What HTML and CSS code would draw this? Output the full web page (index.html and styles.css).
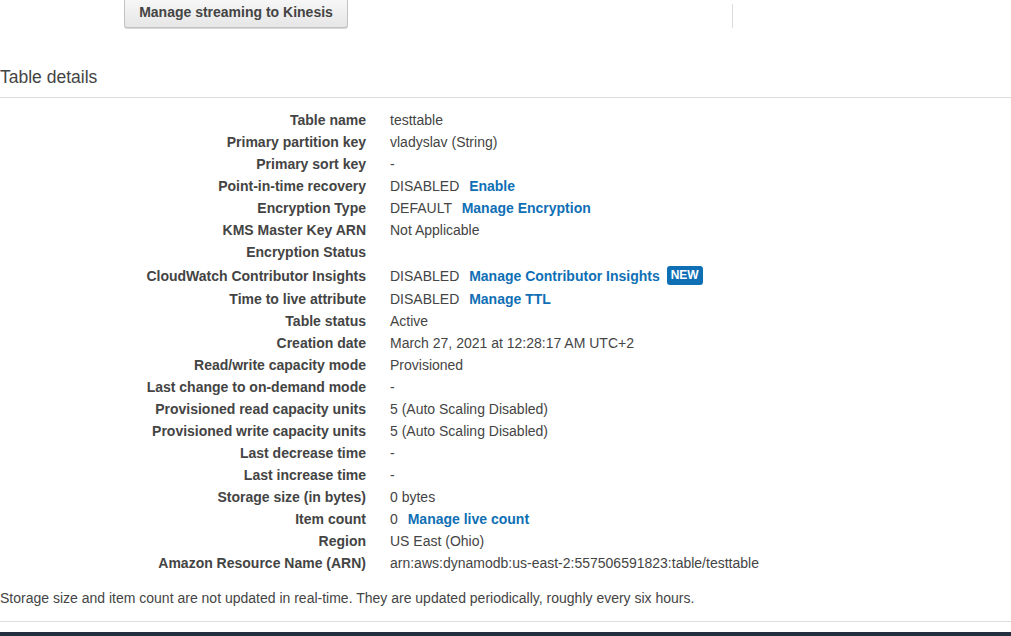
FILE: index.html
```html
<!DOCTYPE html>
<html>
<head>
<meta charset="utf-8">
<link rel="stylesheet" href="styles.css">
</head>
<body>
<div class="page">
  <div class="top">
    <div class="top-left">
      <button class="btn">Manage streaming to Kinesis</button>
    </div>
    <div class="vdivider"></div>
  </div>

  <h2 class="heading">Table details</h2>

  <div class="details">
    <div class="row"><div class="label">Table name</div><div class="value">testtable</div></div>
    <div class="row"><div class="label">Primary partition key</div><div class="value">vladyslav (String)</div></div>
    <div class="row"><div class="label">Primary sort key</div><div class="value">-</div></div>
    <div class="row"><div class="label">Point-in-time recovery</div><div class="value">DISABLED <a class="link">Enable</a></div></div>
    <div class="row"><div class="label">Encryption Type</div><div class="value">DEFAULT <a class="link">Manage Encryption</a></div></div>
    <div class="row"><div class="label">KMS Master Key ARN</div><div class="value">Not Applicable</div></div>
    <div class="row"><div class="label">Encryption Status</div><div class="value"></div></div>
    <div class="row tall"><div class="label">CloudWatch Contributor Insights</div><div class="value">DISABLED <a class="link">Manage Contributor Insights</a><span class="badge">NEW</span></div></div>
    <div class="row"><div class="label">Time to live attribute</div><div class="value">DISABLED <a class="link">Manage TTL</a></div></div>
    <div class="row"><div class="label">Table status</div><div class="value">Active</div></div>
    <div class="row"><div class="label">Creation date</div><div class="value">March 27, 2021 at 12:28:17 AM UTC+2</div></div>
    <div class="row"><div class="label">Read/write capacity mode</div><div class="value">Provisioned</div></div>
    <div class="row"><div class="label">Last change to on-demand mode</div><div class="value">-</div></div>
    <div class="row"><div class="label">Provisioned read capacity units</div><div class="value">5 (Auto Scaling Disabled)</div></div>
    <div class="row"><div class="label">Provisioned write capacity units</div><div class="value">5 (Auto Scaling Disabled)</div></div>
    <div class="row"><div class="label">Last decrease time</div><div class="value">-</div></div>
    <div class="row"><div class="label">Last increase time</div><div class="value">-</div></div>
    <div class="row"><div class="label">Storage size (in bytes)</div><div class="value">0 bytes</div></div>
    <div class="row"><div class="label">Item count</div><div class="value">0 <a class="link">Manage live count</a></div></div>
    <div class="row"><div class="label">Region</div><div class="value">US East (Ohio)</div></div>
    <div class="row"><div class="label">Amazon Resource Name (ARN)</div><div class="value">arn:aws:dynamodb:us-east-2:557506591823:table/testtable</div></div>
  </div>

  <p class="note">Storage size and item count are not updated in real-time. They are updated periodically, roughly every six hours.</p>
  <div class="footer-rule"></div>
  <div class="footer-bar"></div>
</div>
</body>
</html>
```

FILE: styles.css
```css
html, body {
  margin: 0;
  padding: 0;
  background: #fff;
}
body {
  font-family: "Liberation Sans", Arial, sans-serif;
  font-size: 14px;
  color: #444;
  overflow: hidden;
}
.page {
  display: flex;
  flex-direction: column;
  margin-top: -4px;
}
.top {
  display: flex;
  align-items: flex-start;
  height: 32px;
}
.top-left {
  width: 732px;
  padding-left: 124px;
  box-sizing: border-box;
}
.btn {
  display: block;
  width: 224px;
  height: 32px;
  box-sizing: border-box;
  border: 1px solid #c2c2c2;
  border-top: none;
  border-radius: 0 0 3px 3px;
  background: linear-gradient(#f9f9f9, #e6e6e6);
  box-shadow: 0 1px 0 #d8d8d8;
  font-family: "Liberation Sans", Arial, sans-serif;
  font-size: 14px;
  font-weight: bold;
  color: #444;
  padding: 0;
  padding-top: 1px;
}
.vdivider {
  width: 1px;
  height: 24px;
  margin-top: 8px;
  background: #dcdcdc;
}
.heading {
  margin: 37px 0 0 0;
  font-size: 17.5px;
  font-weight: normal;
  color: #444;
  line-height: 24px;
  padding-bottom: 8px;
  border-bottom: 1px solid #dddddd;
}
.details {
  display: flex;
  flex-direction: column;
  padding-top: 11px;
}
.row {
  display: flex;
  align-items: center;
  height: 22px;
  gap: 24px;
}
.row.tall {
  height: 25px;
}
.label {
  width: 366px;
  flex-shrink: 0;
  text-align: right;
  font-weight: bold;
  color: #444;
}
.value {
  display: flex;
  align-items: center;
  white-space: pre;
  color: #444;
}
.link {
  color: #0f6fb5;
  font-weight: bold;
  margin-left: 6px;
  cursor: pointer;
}
.badge {
  display: inline-block;
  margin-left: 7px;
  background: #0f6fb5;
  color: #fff;
  font-size: 12px;
  font-weight: bold;
  line-height: 19px;
  padding: 0 4px;
  border-radius: 3px;
}
.note {
  margin: 14px 0 0 0;
  line-height: 20px;
  color: #444;
}
.footer-rule {
  margin-top: 13px;
  height: 1px;
  background: #dddddd;
}
.footer-bar {
  margin-top: 10px;
  height: 10px;
  background: #232f3e;
}
```
